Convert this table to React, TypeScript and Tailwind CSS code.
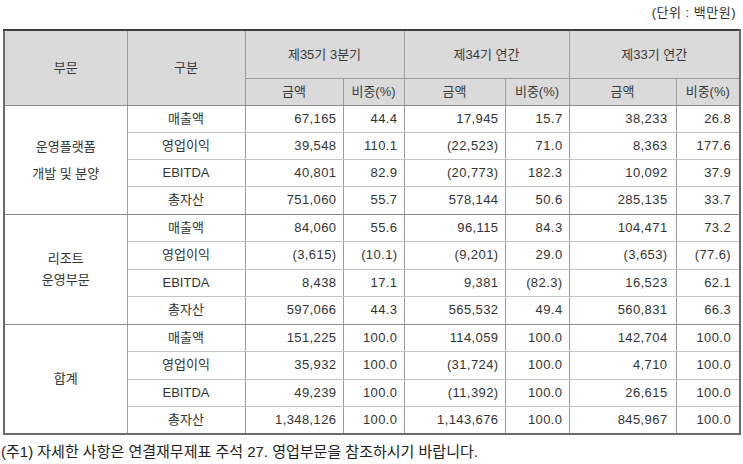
import React from 'react';

type Row = { label: string; values: string[] };
type Section = { title: string[]; leading: string; rows: Row[]; heights: string[] };

const sections: Section[] = [
  {
    title: ['운영플랫폼', '개발 및 분양'],
    leading: 'leading-[27px]',
    heights: ['h-[27px]', 'h-[27px]', 'h-[27px]', 'h-[28px]'],
    rows: [
      { label: '매출액', values: ['67,165', '44.4', '17,945', '15.7', '38,233', '26.8'] },
      { label: '영업이익', values: ['39,548', '110.1', '(22,523)', '71.0', '8,363', '177.6'] },
      { label: 'EBITDA', values: ['40,801', '82.9', '(20,773)', '182.3', '10,092', '37.9'] },
      { label: '총자산', values: ['751,060', '55.7', '578,144', '50.6', '285,135', '33.7'] },
    ],
  },
  {
    title: ['리조트', '운영부문'],
    leading: 'leading-[21px]',
    heights: ['h-[27px]', 'h-[28px]', 'h-[27px]', 'h-[28px]'],
    rows: [
      { label: '매출액', values: ['84,060', '55.6', '96,115', '84.3', '104,471', '73.2'] },
      { label: '영업이익', values: ['(3,615)', '(10.1)', '(9,201)', '29.0', '(3,653)', '(77.6)'] },
      { label: 'EBITDA', values: ['8,438', '17.1', '9,381', '(82.3)', '16,523', '62.1'] },
      { label: '총자산', values: ['597,066', '44.3', '565,532', '49.4', '560,831', '66.3'] },
    ],
  },
  {
    title: ['합계'],
    leading: 'leading-[27px]',
    heights: ['h-[27px]', 'h-[28px]', 'h-[27px]', 'h-[28px]'],
    rows: [
      { label: '매출액', values: ['151,225', '100.0', '114,059', '100.0', '142,704', '100.0'] },
      { label: '영업이익', values: ['35,932', '100.0', '(31,724)', '100.0', '4,710', '100.0'] },
      { label: 'EBITDA', values: ['49,239', '100.0', '(11,392)', '100.0', '26,615', '100.0'] },
      { label: '총자산', values: ['1,348,126', '100.0', '1,143,676', '100.0', '845,967', '100.0'] },
    ],
  },
];

const periods = ['제35기 3분기', '제34기 연간', '제33기 연간'];

export default function App() {
  return (
    <div className="w-[743px] h-[464px] bg-white text-[#333] font-['Liberation_Sans','Noto_Sans_CJK_KR',sans-serif] text-[13px]">
      <div className="h-[29px] pr-[7px] text-right leading-[26px] tracking-[0.5px]">(단위 : 백만원)</div>

      <table className="ml-[3px] w-[736px] table-fixed border-collapse border-2 border-[#6b6b6b] border-t-[#3f3f3f]">
        <colgroup>
          <col className="w-[123px]" />
          <col className="w-[118px]" />
          <col className="w-[98px]" />
          <col className="w-[61px]" />
          <col className="w-[101px]" />
          <col className="w-[64px]" />
          <col className="w-[107px]" />
          <col className="w-[64px]" />
        </colgroup>
        <thead className="bg-[#dadada] text-[#3a3a3a]">
          <tr className="h-[48px]">
            <th rowSpan={2} className="font-normal border border-[#9a9a9a] border-b-[#8a8a8a]">부문</th>
            <th rowSpan={2} className="font-normal border border-[#9a9a9a] border-b-[#8a8a8a]">구분</th>
            {periods.map((p) => (
              <th key={p} colSpan={2} className="font-normal border border-[#9a9a9a]">
                {p}
              </th>
            ))}
          </tr>
          <tr className="h-[27px]">
            {periods.map((p) => (
              <React.Fragment key={p}>
                <th className="font-normal border border-[#9a9a9a] border-b-[#8a8a8a]">금액</th>
                <th className="font-normal border border-[#9a9a9a] border-b-[#8a8a8a]">비중(%)</th>
              </React.Fragment>
            ))}
          </tr>
        </thead>
        <tbody>
          {sections.map((s) =>
            s.rows.map((r, i) => (
              <tr key={s.title[0] + r.label} className={s.heights[i]}>
                {i === 0 && (
                  <td
                    rowSpan={4}
                    className={`text-center border border-[#a0a0a0] border-b-[#8a8a8a] ${s.leading}`}
                  >
                    {s.title.map((t) => (
                      <div key={t}>{t}</div>
                    ))}
                  </td>
                )}
                <td
                  className={`text-center border-x border-x-[#9a9a9a] border-y ${
                    i === 3 ? 'border-b-[#8a8a8a]' : 'border-b-[#c4c4c4]'
                  } border-t-[#c4c4c4]`}
                >
                  {r.label}
                </td>
                {r.values.map((v, j) => (
                  <td
                    key={j}
                    className={`text-right tracking-[0.4px] border-x border-x-[#9a9a9a] border-y ${
                      i === 3 ? 'border-b-[#8a8a8a]' : 'border-b-[#c4c4c4]'
                    } border-t-[#c4c4c4] ${j >= 4 ? 'pr-[8px]' : 'pr-[6px]'}`}
                  >
                    {v}
                  </td>
                ))}
              </tr>
            ))
          )}
        </tbody>
      </table>

      <div className="pl-[1px] pt-[8px] text-[15px] leading-[18px] text-[#222]">
        (주1) 자세한 사항은 연결재무제표 주석 27. 영업부문을 참조하시기 바랍니다.
      </div>
    </div>
  );
}
